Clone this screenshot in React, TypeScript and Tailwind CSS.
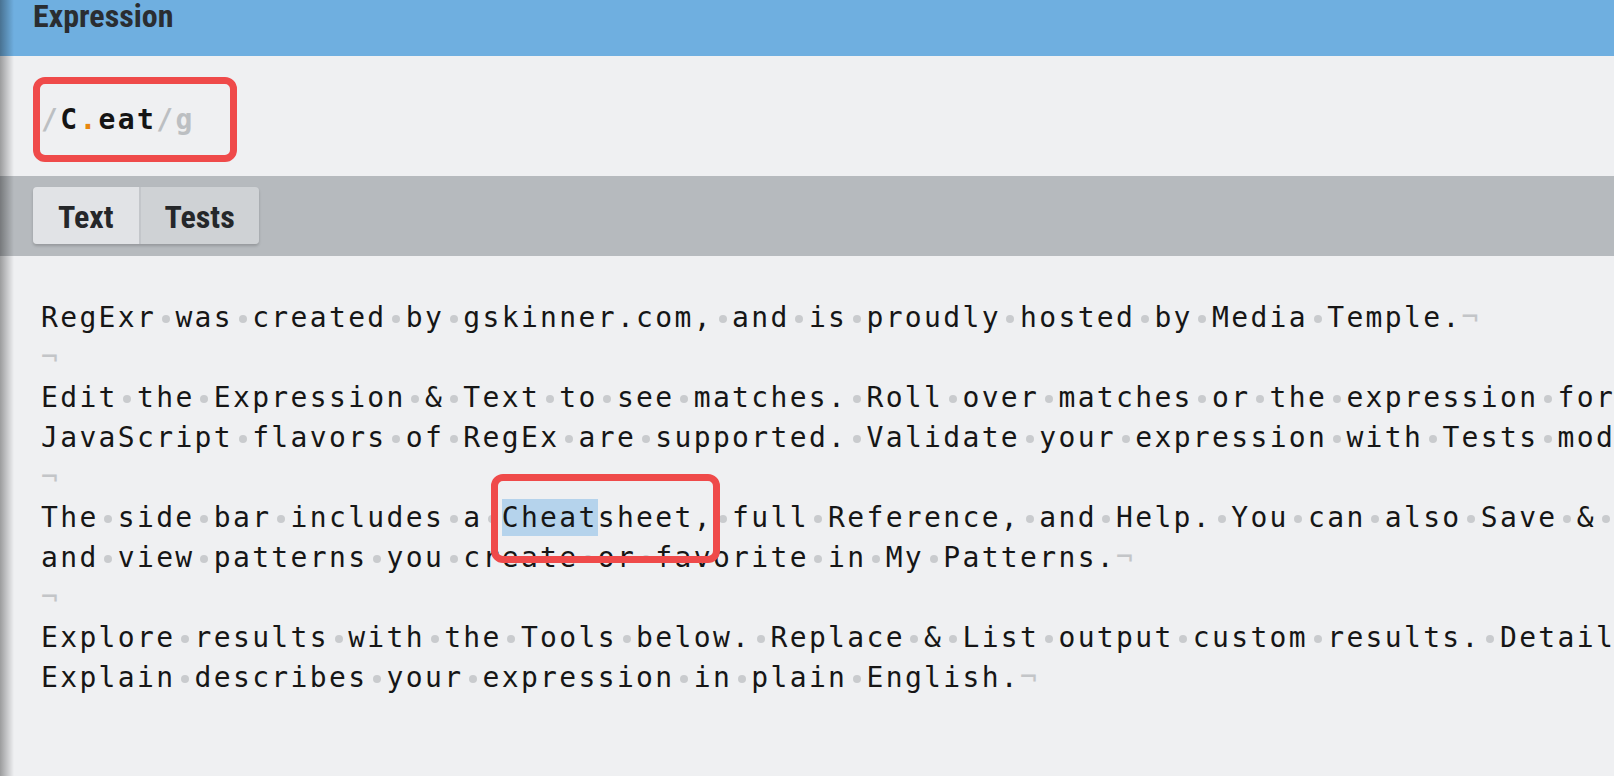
import React from 'react';

type Seg = string | { hl: string };

const lines: { segs: Seg[]; end?: boolean }[] = [
  { segs: ['RegExr was created by gskinner.com, and is proudly hosted by Media Temple.'], end: true },
  { segs: [], end: true },
  { segs: ['Edit the Expression & Text to see matches. Roll over matches or the expression for details. PCRE & '] },
  { segs: ['JavaScript flavors of RegEx are supported. Validate your expression with Tests mode.'], end: true },
  { segs: [], end: true },
  { segs: ['The side bar includes a ', { hl: 'Cheat' }, 'sheet, full Reference, and Help. You can also Save & Share with the Community, '] },
  { segs: ['and view patterns you create or favorite in My Patterns.'], end: true },
  { segs: [], end: true },
  { segs: ['Explore results with the Tools below. Replace & List output custom results. Details lists capture groups. '] },
  { segs: ['Explain describes your expression in plain English.'], end: true },
];

function Space() {
  return (
    <span className="inline-block w-[19.2px] align-middle">
      <span className="mx-auto block size-[8px] rounded-full bg-[#c9cbce]" />
    </span>
  );
}

function Words({ text }: { text: string }) {
  const parts = text.split(' ');
  return (
    <>
      {parts.map((p, i) => (
        <React.Fragment key={i}>
          {i > 0 && <Space />}
          {p && <span>{p}</span>}
        </React.Fragment>
      ))}
    </>
  );
}

export default function App() {
  return (
    <div className="relative h-[776px] w-full overflow-hidden bg-[#eff0f2]">
      {/* header */}
      <div className="h-[56px] bg-[#6fafe0] pl-[33px]">
        <div className="font-['Liberation_Sans_Narrow','Roboto_Condensed',Roboto,sans-serif] text-[32px] font-bold leading-[32px] text-[#2a2d31]">
          Expression
        </div>
      </div>

      {/* expression */}
      <div className="h-[120px] pl-[41px] pt-[44px]">
        <div className="whitespace-nowrap font-['DejaVu_Sans_Mono',monospace] text-[28px] font-bold leading-[40px] tracking-[2.34px] text-[#151515]">
          <span className="text-[#bcbfc2]">/</span>C<span className="text-[#e8860f]">.</span>eat
          <span className="text-[#bcbfc2]">/g</span>
        </div>
      </div>

      {/* tabs */}
      <div className="h-[80px] bg-[#b6babe] pl-[33px] pt-[11px]">
        <div className="flex w-fit rounded-[4px] shadow-[0_2px_3px_rgba(0,0,0,0.18)] font-['Liberation_Sans_Narrow','Roboto_Condensed',Roboto,sans-serif] text-[32px] font-bold text-[#25272a]">
          <div className="flex h-[57px] items-center rounded-l-[4px] bg-[#e1e3e6] px-[25px] pt-[2px]">Text</div>
          <div className="flex h-[57px] items-center rounded-r-[4px] border-l-2 border-[#c3c6ca] bg-[#cfd2d5] px-[24px] pt-[2px]">Tests</div>
        </div>
      </div>

      {/* text */}
      <div className="pl-[41px] pt-[42px] font-['DejaVu_Sans_Mono',monospace] text-[28px] leading-[40px] tracking-[2.34px] text-[#161616]">
        {lines.map((l, i) => (
          <div key={i} className="h-[40px] whitespace-nowrap">
            {l.segs.map((s, j) =>
              typeof s === 'string' ? (
                <Words key={j} text={s} />
              ) : (
                <span key={j} className="bg-[#b5d3ec] py-[2px]">{s.hl}</span>
              )
            )}
            {l.end && <span className="text-[#c3c5c8]">¬</span>}
          </div>
        ))}
      </div>

      {/* left shadow */}
      <div className="pointer-events-none absolute left-0 top-0 h-full w-[14px] bg-linear-to-r from-black/35 to-transparent" />

      {/* annotation boxes */}
      <div className="absolute left-[33px] top-[77px] h-[85px] w-[204px] rounded-[12px] border-[7px] border-[#ef4a4a]" />
      <div className="absolute left-[491px] top-[474px] h-[89px] w-[229px] rounded-[12px] border-[7px] border-[#ef4a4a]" />
    </div>
  );
}
